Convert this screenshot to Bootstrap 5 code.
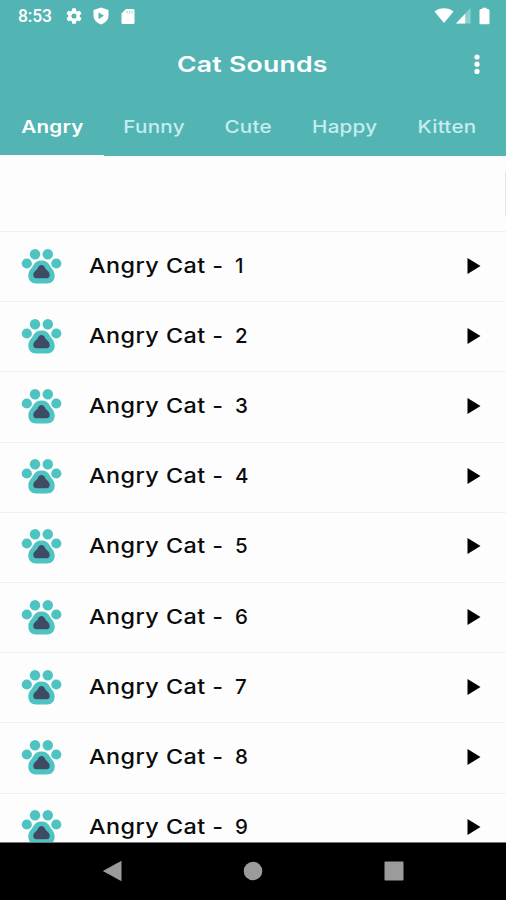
<!DOCTYPE html>
<html lang="en">
<head>
<meta charset="utf-8">
<meta name="viewport" content="width=device-width, initial-scale=1">
<title>Cat Sounds</title>
<link href="https://cdn.jsdelivr.net/npm/bootstrap@5.3.0/dist/css/bootstrap.min.css" rel="stylesheet">
<style>
  body { font-family: Inter, "Noto Sans", sans-serif; background: #fdfdfd; color: #0b0b0b; }
  svg { display: block; flex: none; }
  .screen { width: 506px; height: 900px; }
  .app-head { background: #53b4b4; height: 156px; }
  .status { height: 32px; padding: 0 16px 0 18px; }
  .clock { font: 500 17.5px/32px Roboto, sans-serif; width: 48px; letter-spacing: -.2px; }
  .ic-shield { margin-left: 11px; }
  .ic-card { margin-left: 12px; }
  .ic-signal { margin-left: 2px; }
  .title-bar { height: 66px; display: grid; grid-template-columns: 1fr auto 1fr; padding: 0 22px 2px 21px; }
  .app-title { font-size: 22px; font-weight: 600; line-height: 30px; letter-spacing: .2px; transform: scaleX(1.21); }
  .sound-tabs { height: 59px; margin-top: -1px; }
  .sound-tabs .nav-link { color: #c5ecef; padding: 0; height: 59px; line-height: 59px; font-size: 17.5px; font-weight: 500; text-align: center; border-radius: 0; letter-spacing: .2px; }
  .sound-tabs .nav-link span { display: inline-block; transform: scaleX(1.18); }
  .sound-tabs .nav-link.active { color: #fff; font-weight: 600; height: 60px; border-bottom: 2px solid #fff; }
  .t1 { width: 104px; } .t2 { width: 100px; } .t3 { width: 88px; } .t4 { width: 105px; } .t5 { width: 100px; }
  .banner { height: 76px; padding-top: 16px; border-bottom: 1px solid #f1f1f1; }
  .edge { width: 1px; height: 44px; background: #e4e4e4; }
  .sound-item { height: 70.2px; padding: 0 25px 2px 21px; border-bottom: 1px solid #f1f1f1; }
  .sound-name { font-size: 20.5px; font-weight: 500; line-height: 28px; margin-left: 26px; width: 146px; letter-spacing: .4px; white-space: nowrap; }
  .sound-name > span { display: inline-block; transform: scaleX(1.14); transform-origin: left; }
  .sound-no { font-size: 20.5px; font-weight: 500; line-height: 28px; }
  .sys-nav { height: 58px; background: #000; border-top: 1px solid #777; padding: 0 102px 2px; }
</style>
</head>
<body>
<svg width="0" height="0" class="position-absolute" aria-hidden="true">
  <symbol id="paw" viewBox="0 0 42 36">
    <g fill="#4ec4c2"><circle cx="5.800" cy="15.500" r="5.100"/><circle cx="14" cy="6.200" r="5.200"/><circle cx="26.800" cy="6.200" r="5.200"/><circle cx="35.300" cy="15.500" r="5.100"/>
    <path d="M20.500 12.500c4 0 6.800 1.700 8.500 5.200 1.300 2.600 4.700 4.800 4.700 9.600 0 5.200-3 8.200-7.700 8.200H15c-4.700 0-7.700-3-7.700-8.200 0-4.800 3.400-7 4.700-9.600 1.700-3.500 4.500-5.200 8.500-5.200z"/></g>
    <path fill="#3f4b63" d="M20.500 17c1.700 0 2.700.9 3.400 2.500.7 1.400 1.400 2 2.400 3 1.500 1.400 2.400 2.500 2.400 4.500 0 2.200-1.200 3.300-3.300 3.300h-9.800c-2.100 0-3.300-1.100-3.300-3.300 0-2 .9-3.100 2.400-4.500 1-1 1.700-1.600 2.400-3 .7-1.600 1.700-2.500 3.400-2.500z"/>
  </symbol>
  <symbol id="play" viewBox="0 0 14 18"><path d="M.5 1v16L13.500 9z" fill="#000"/></symbol>
</svg>
<div class="screen d-flex flex-column overflow-hidden">
  <header class="app-head flex-shrink-0">
    <div class="status d-flex align-items-center text-white">
      <span class="clock">8:53</span>
      <svg width="16" height="16" viewBox="2 2 20 20" fill="#fff"><path d="M19.140 12.940c.04-.3.06-.61.06-.94s-.02-.64-.07-.94l2.030-1.580a.49.49 0 0 0 .12-.61l-1.920-3.320a.49.49 0 0 0-.59-.22l-2.390.96a7 7 0 0 0-1.620-.94l-.36-2.540a.48.48 0 0 0-.48-.41h-3.840a.47.47 0 0 0-.47.41l-.36 2.540c-.59.240-1.130.570-1.620.940l-2.390-.96a.47.47 0 0 0-.59.220L2.740 8.870a.47.47 0 0 0 .12.610l2.030 1.580a6 6 0 0 0 0 1.880l-2.030 1.580a.49.49 0 0 0-.12.610l1.920 3.320c.12.220.37.290.59.220l2.390-.96c.5.380 1.030.700 1.620.940l.36 2.540c.05.240.24.410.48.410h3.840c.24 0 .44-.17.470-.41l.36-2.540a7 7 0 0 0 1.620-.94l2.390.96c.22.080.47 0 .59-.22l1.920-3.320a.47.47 0 0 0-.12-.61zM12 15.200a3.200 3.200 0 1 1 0-6.400 3.200 3.200 0 0 1 0 6.400z"/></svg>
      <svg class="ic-shield" width="16" height="18" viewBox="0 0 16 18"><path fill="#fff" d="M8 .5 15.500 3v5.500c0 4-3 7.500-7.500 9-4.500-1.500-7.500-5-7.500-9V3z"/><path fill="#53b4b4" d="M5.500 5.500v6.500l5.500-3.250z"/></svg>
      <svg class="ic-card" width="14" height="17" viewBox="0 0 14 17"><path fill="#fff" d="M5 1h7a1.500 1.500 0 0 1 1.500 1.500v12A1.500 1.500 0 0 1 12 16H2a1.500 1.500 0 0 1-1.500-1.500v-9z"/><path stroke="#9dd3d3" d="M6 3v2.500M8.500 3v2.500M11 3v2.500"/></svg>
      <svg class="ms-auto" width="20" height="16" viewBox="0 0 20 16"><path fill="#fff" d="M10 15 .5 3.500C6-.7 14-.7 19.500 3.500z"/></svg>
      <svg class="ic-signal" width="15" height="16" viewBox="0 0 15 16"><path fill="#8fcfd0" d="M14.500 0v15.500H0z"/><path fill="#fff" d="M9.200 5.800v9.700H0z"/></svg>
      <svg class="ms-2" width="11" height="18" viewBox="0 0 11 18"><path fill="#fff" d="M3.300 2V.8h4.400V2H9a1.500 1.500 0 0 1 1.500 1.500V16A1.200 1.200 0 0 1 9.300 17.200H1.700A1.200 1.200 0 0 1 .5 16V3.500A1.500 1.500 0 0 1 2 2z"/></svg>
    </div>
    <div class="title-bar align-items-center text-white">
      <span></span>
      <h1 class="app-title m-0">Cat Sounds</h1>
      <svg class="ms-auto" width="14" height="22" viewBox="0 0 14 22" fill="#fff"><circle cx="7" cy="4" r="2.600"/><circle cx="7" cy="11.200" r="2.600"/><circle cx="7" cy="18.400" r="2.600"/></svg>
    </div>
    <nav class="sound-tabs nav flex-nowrap">
      <a class="nav-link active t1" href="#"><span>Angry</span></a>
      <a class="nav-link t2" href="#"><span>Funny</span></a>
      <a class="nav-link t3" href="#"><span>Cute</span></a>
      <a class="nav-link t4" href="#"><span>Happy</span></a>
      <a class="nav-link t5" href="#"><span>Kitten</span></a>
    </nav>
  </header>
  <main class="flex-grow-1 overflow-hidden">
    <div class="banner"><div class="edge ms-auto"></div></div>
    <div id="sounds">
      <div class="sound-item d-flex align-items-center"><svg width="42" height="36"><use href="#paw"/></svg><span class="sound-name"><span>Angry Cat -</span></span><span class="sound-no">1</span><svg class="ms-auto" width="14" height="18"><use href="#play"/></svg></div>
      <div class="sound-item d-flex align-items-center"><svg width="42" height="36"><use href="#paw"/></svg><span class="sound-name"><span>Angry Cat -</span></span><span class="sound-no">2</span><svg class="ms-auto" width="14" height="18"><use href="#play"/></svg></div>
      <div class="sound-item d-flex align-items-center"><svg width="42" height="36"><use href="#paw"/></svg><span class="sound-name"><span>Angry Cat -</span></span><span class="sound-no">3</span><svg class="ms-auto" width="14" height="18"><use href="#play"/></svg></div>
      <div class="sound-item d-flex align-items-center"><svg width="42" height="36"><use href="#paw"/></svg><span class="sound-name"><span>Angry Cat -</span></span><span class="sound-no">4</span><svg class="ms-auto" width="14" height="18"><use href="#play"/></svg></div>
      <div class="sound-item d-flex align-items-center"><svg width="42" height="36"><use href="#paw"/></svg><span class="sound-name"><span>Angry Cat -</span></span><span class="sound-no">5</span><svg class="ms-auto" width="14" height="18"><use href="#play"/></svg></div>
      <div class="sound-item d-flex align-items-center"><svg width="42" height="36"><use href="#paw"/></svg><span class="sound-name"><span>Angry Cat -</span></span><span class="sound-no">6</span><svg class="ms-auto" width="14" height="18"><use href="#play"/></svg></div>
      <div class="sound-item d-flex align-items-center"><svg width="42" height="36"><use href="#paw"/></svg><span class="sound-name"><span>Angry Cat -</span></span><span class="sound-no">7</span><svg class="ms-auto" width="14" height="18"><use href="#play"/></svg></div>
      <div class="sound-item d-flex align-items-center"><svg width="42" height="36"><use href="#paw"/></svg><span class="sound-name"><span>Angry Cat -</span></span><span class="sound-no">8</span><svg class="ms-auto" width="14" height="18"><use href="#play"/></svg></div>
      <div class="sound-item d-flex align-items-center"><svg width="42" height="36"><use href="#paw"/></svg><span class="sound-name"><span>Angry Cat -</span></span><span class="sound-no">9</span><svg class="ms-auto" width="14" height="18"><use href="#play"/></svg></div>
    </div>
  </main>
  <footer class="sys-nav flex-shrink-0 d-flex align-items-center justify-content-between">
    <svg width="20" height="22" viewBox="0 0 20 22"><path fill="#9b9b9b" d="M19.500.8v20.400L.8 11z"/></svg>
    <svg width="20" height="20" viewBox="0 0 20 20"><circle cx="10" cy="10" r="9.300" fill="#9b9b9b"/></svg>
    <svg width="20" height="20" viewBox="0 0 20 20"><rect x=".5" y=".5" width="19" height="19" rx="1" fill="#9b9b9b"/></svg>
  </footer>
</div>
<script src="https://cdn.jsdelivr.net/npm/bootstrap@5.3.0/dist/js/bootstrap.bundle.min.js"></script>
</body>
</html>
